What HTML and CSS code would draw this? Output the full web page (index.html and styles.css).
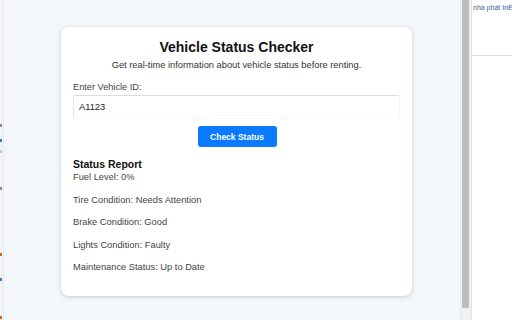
FILE: index.html
```html
<!DOCTYPE html>
<html lang="en">
<head>
  <meta charset="UTF-8">
  <meta name="viewport" content="width=device-width, initial-scale=1.0">
  <title>Vehicle Status Checker</title>
  <link rel="stylesheet" href="styles.css">
</head>
<body>
  <div class="edge-strip">
    <span class="dot dot-grey" style="top: 124px"></span>
    <span class="dot dot-blue" style="top: 139px"></span>
    <span class="dot dot-pink" style="top: 150px"></span>
    <span class="dot dot-grey" style="top: 187px"></span>
    <span class="dot dot-orange" style="top: 253px"></span>
    <span class="dot dot-blue" style="top: 278px"></span>
    <span class="dot dot-orange" style="top: 316px"></span>
  </div>
  <div class="page">
    <div class="card">
      <h1>Vehicle Status Checker</h1>
      <p class="subtitle">Get real-time information about vehicle status before renting.</p>
      <label for="vehicle-id">Enter Vehicle ID:</label>
      <textarea id="vehicle-id">A1123</textarea>
      <div class="btn-row">
        <button>Check Status</button>
      </div>
      <div class="report">
        <h3>Status Report</h3>
        <p class="first">Fuel Level: 0%</p>
        <p>Tire Condition: Needs Attention</p>
        <p>Brake Condition: Good</p>
        <p>Lights Condition: Faulty</p>
        <p>Maintenance Status: Up to Date</p>
      </div>
    </div>
  </div>
  <div class="scrollbar"><div class="thumb"></div></div>
  <div class="side-panel">
    <div class="side-text">nhà phát triển</div>
  </div>
</body>
</html>
```

FILE: styles.css
```css
html, body {
  margin: 0;
  height: 320px;
  overflow: hidden;
}

body {
  font-family: "Liberation Sans", Arial, Helvetica, sans-serif;
  display: flex;
  background: #fff;
  color: #222;
}

.edge-strip {
  width: 3px;
  flex: 0 0 3px;
  background: #f1f3f6;
  border-right: 1px solid #e6e9ee;
  position: relative;
}

.dot {
  position: absolute;
  left: 0;
  width: 2px;
  height: 3px;
}
.dot-grey { background: #8a8a8a; }
.dot-blue { background: #3b78c9; }
.dot-pink { background: #e9b7b7; }
.dot-orange { background: #c96a2a; }

.page {
  flex: 1;
  background: #f3f6fb;
  padding: 27px 0 0 57px;
}

.card {
  width: 327px;
  height: 257px;
  background: #fff;
  border-radius: 8px;
  padding: 12px 12px 0 12px;
  box-shadow: 0 1px 4px rgba(0, 0, 0, 0.18);
}

h1 {
  margin: 0;
  text-align: center;
  font-size: 14px;
  line-height: 16px;
  color: #111;
}

.subtitle {
  margin: 4px 0 0 0;
  text-align: center;
  font-size: 9.3px;
  line-height: 12px;
  color: #333;
}

label {
  display: block;
  margin-top: 10px;
  font-size: 9.2px;
  line-height: 12px;
  color: #444;
}

textarea {
  display: block;
  box-sizing: border-box;
  width: 327px;
  height: 24px;
  margin-top: 2px;
  padding: 5px 5px;
  font-family: "Liberation Sans", Arial, sans-serif;
  font-size: 9.3px;
  line-height: 12px;
  color: #222;
  border: 1px solid #f7f7f7;
  border-top-color: #dcdcdc;
  border-left-color: #e2e2e2;
  border-radius: 2px;
  resize: none;
  overflow: hidden;
}

.btn-row {
  display: flex;
  justify-content: center;
  margin-top: 7px;
}

button {
  width: 79px;
  height: 21px;
  padding: 0;
  border: none;
  border-radius: 3px;
  background: #0a7bff;
  color: #fff;
  font-family: "Liberation Sans", Arial, sans-serif;
  font-size: 8.5px;
  font-weight: bold;
  margin-left: 1px;
}

.report {
  margin-top: 11px;
}

.report h3 {
  margin: 0;
  font-size: 10.5px;
  line-height: 13px;
  color: #111;
}

.report p {
  margin: 10.5px 0 0 0;
  font-size: 9.3px;
  line-height: 12px;
  color: #444;
}

.report p.first {
  margin-top: 0;
}

.scrollbar {
  flex: 0 0 10px;
  background: #f1f1f1;
  border-left: 1px solid #e8e8e8;
}

.thumb {
  width: 7px;
  height: 308px;
  margin-left: 1px;
  background: #bdbdbd;
}

.side-panel {
  flex: 0 0 40px;
  background: #fff;
  border-left: 1px solid #e4e4e4;
  overflow: hidden;
}

.side-text {
  white-space: nowrap;
  font-family: "Liberation Sans", Arial, sans-serif;
  font-size: 7px;
  line-height: 9px;
  color: #3b64a8;
  padding: 3px 0 0 1px;
  height: 52px;
  border-bottom: 1px solid #dedede;
}
```
